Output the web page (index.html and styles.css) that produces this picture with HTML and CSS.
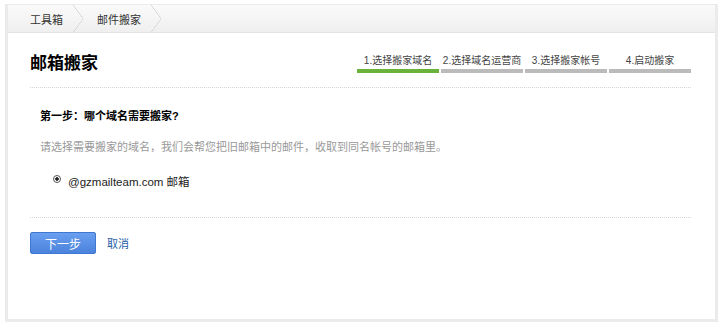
FILE: index.html
```html
<!DOCTYPE html>
<html lang="zh-CN">
<head>
  <meta charset="UTF-8" />
  <title>邮箱搬家</title>
  <link rel="stylesheet" href="styles.css">
</head>
<body>
  <div class="frame">
    <div class="crumbs">
      <span class="crumb">工具箱</span>
      <span class="sep"></span>
      <span class="crumb">邮件搬家</span>
      <span class="sep"></span>
    </div>
    <div class="main">
      <div class="head">
        <h1>邮箱搬家</h1>
        <ol class="steps">
          <li class="on">1.选择搬家域名</li>
          <li>2.选择域名运营商</li>
          <li>3.选择搬家帐号</li>
          <li>4.启动搬家</li>
        </ol>
      </div>
      <div class="body">
        <h3>第一步：哪个域名需要搬家?</h3>
        <p class="tip">请选择需要搬家的域名，我们会帮您把旧邮箱中的邮件，收取到同名帐号的邮箱里。</p>
        <div class="opt"><span class="radio"></span><span>@gzmailteam.com 邮箱</span></div>
      </div>
      <div class="actions">
        <button class="btn">下一步</button>
        <a class="cancel" href="#">取消</a>
      </div>
    </div>
  </div>
</body>
</html>
```

FILE: styles.css
```css
* {
  margin: 0;
  padding: 0;
  box-sizing: border-box;
}

body {
  background: #fff;
  font-family: "Liberation Sans", "Noto Sans CJK SC", sans-serif;
  font-size: 12px;
  color: #000;
  padding: 4px 6px 0 5px;
}

.frame {
  width: 713px;
  height: 318px;
  border: 3px solid #ebebeb;
  border-top-width: 1px;
  background: #fff;
}

.crumbs {
  height: 28px;
  display: flex;
  align-items: center;
  padding-left: 22px;
  background: linear-gradient(#fafafa, #efefef);
  border-bottom: 1px solid #e2e2e2;
}

.crumb {
  font-size: 11px;
  color: #333;
}

.sep {
  width: 10px;
  height: 27px;
  margin: 0 14px 0 10px;
  background: linear-gradient(to top right, transparent 47%, #cdcdcd 50%, transparent 54%) top / 100% 50% no-repeat,
    linear-gradient(to bottom right, transparent 47%, #cdcdcd 50%, transparent 54%) bottom / 100% 50% no-repeat;
}

.main {
  padding: 0 24px 0 22px;
}

.head {
  display: flex;
  justify-content: space-between;
  align-items: flex-end;
  height: 55px;
  padding-bottom: 14px;
  border-bottom: 1px dotted #d4d4d4;
}

h1 {
  font-size: 17px;
  font-weight: bold;
  line-height: 22px;
  margin-bottom: -2px;
}

.steps {
  list-style: none;
  display: flex;
  gap: 2px;
}

.steps li {
  width: 82px;
  text-align: center;
  font-size: 10px;
  color: #444;
  line-height: 13px;
  padding-bottom: 2px;
  border-bottom: 4px solid #bbbbbb;
  white-space: nowrap;
}

.steps li.on {
  border-bottom-color: #6ab23a;
}

.body {
  height: 130px;
  padding: 21px 0 0 10px;
  border-bottom: 1px dotted #d4d4d4;
}

h3 {
  font-size: 11px;
  font-weight: bold;
  line-height: 14px;
}

.tip {
  margin-top: 17px;
  color: #999;
  font-size: 11px;
  line-height: 14px;
}

.opt {
  display: flex;
  align-items: center;
  margin: 19px 0 0 13px;
  font-size: 11.5px;
  color: #222;
}

.radio {
  width: 8px;
  height: 8px;
  margin: -4px 7px 0 0;
  border: 1px solid #555;
  border-radius: 50%;
  background: radial-gradient(#222 1.5px, #fff 2px);
}

.actions {
  display: flex;
  align-items: center;
  padding-top: 14px;
}

.btn {
  width: 66px;
  height: 22px;
  border: 1px solid #3f78d0;
  border-radius: 2px;
  background: linear-gradient(#6a9ff0, #4b83dc);
  color: #fff;
  font-size: 12px;
  font-family: inherit;
}

.cancel {
  margin-left: 11px;
  color: #245ea8;
  text-decoration: none;
  font-size: 11px;
}
```
